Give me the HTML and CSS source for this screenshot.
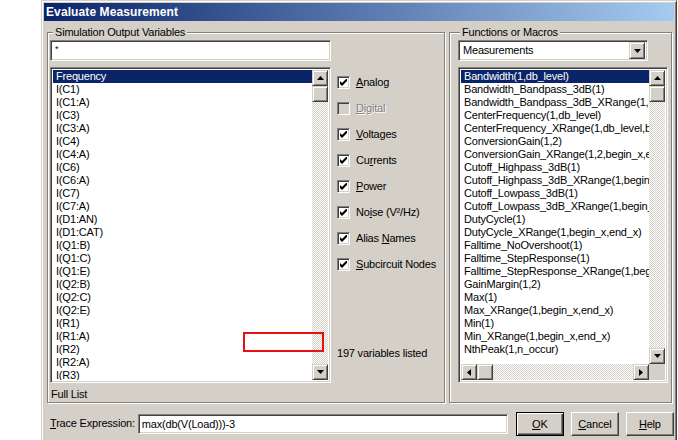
FILE: index.html
```html
<!DOCTYPE html>
<html>
<head>
<meta charset="utf-8">
<title>Evaluate Measurement</title>
<link rel="stylesheet" href="styles.css">
</head>
<body>
<div class="dialog">
  <div class="titlebar">Evaluate Measurement</div>
  <div class="main">
    <div class="group group-left">
      <div class="legend">Simulation Output Variables</div>
      <div class="left-body">
        <div class="left-col">
          <div class="sunken field filter">*</div>
          <div class="sunken listbox var-list">
            <div class="items">
              <div class="item sel">Frequency</div>
              <div class="item">I(C1)</div>
              <div class="item">I(C1:A)</div>
              <div class="item">I(C3)</div>
              <div class="item">I(C3:A)</div>
              <div class="item">I(C4)</div>
              <div class="item">I(C4:A)</div>
              <div class="item">I(C6)</div>
              <div class="item">I(C6:A)</div>
              <div class="item">I(C7)</div>
              <div class="item">I(C7:A)</div>
              <div class="item">I(D1:AN)</div>
              <div class="item">I(D1:CAT)</div>
              <div class="item">I(Q1:B)</div>
              <div class="item">I(Q1:C)</div>
              <div class="item">I(Q1:E)</div>
              <div class="item">I(Q2:B)</div>
              <div class="item">I(Q2:C)</div>
              <div class="item">I(Q2:E)</div>
              <div class="item">I(R1)</div>
              <div class="item">I(R1:A)</div>
              <div class="item">I(R2)</div>
              <div class="item">I(R2:A)</div>
              <div class="item">I(R3)</div>
            </div>
            <div class="vscroll">
              <div class="raised sbtn"><svg width="7" height="4" viewBox="0 0 7 4"><polygon points="3.5,0 7,4 0,4" fill="#000"/></svg></div>
              <div class="raised thumb"></div>
              <div class="track"></div>
              <div class="raised sbtn"><svg width="7" height="4" viewBox="0 0 7 4"><polygon points="0,0 7,0 3.5,4" fill="#000"/></svg></div>
            </div>
            <div class="marker"></div>
          </div>
          <div class="full-list">Full List</div>
        </div>
        <div class="options">
          <div class="opt"><span class="cb"><svg width="7" height="7" viewBox="0 0 7 7"><polygon points="0,2 2,4 7,-1 7,2 2,7 0,5" fill="#000"/></svg></span><span><u>A</u>nalog</span></div>
          <div class="opt disabled"><span class="cb off"></span><span><u>D</u>igital</span></div>
          <div class="opt"><span class="cb"><svg width="7" height="7" viewBox="0 0 7 7"><polygon points="0,2 2,4 7,-1 7,2 2,7 0,5" fill="#000"/></svg></span><span><u>V</u>oltages</span></div>
          <div class="opt"><span class="cb"><svg width="7" height="7" viewBox="0 0 7 7"><polygon points="0,2 2,4 7,-1 7,2 2,7 0,5" fill="#000"/></svg></span><span>Cu<u>r</u>rents</span></div>
          <div class="opt"><span class="cb"><svg width="7" height="7" viewBox="0 0 7 7"><polygon points="0,2 2,4 7,-1 7,2 2,7 0,5" fill="#000"/></svg></span><span><u>P</u>ower</span></div>
          <div class="opt"><span class="cb"><svg width="7" height="7" viewBox="0 0 7 7"><polygon points="0,2 2,4 7,-1 7,2 2,7 0,5" fill="#000"/></svg></span><span>No<u>i</u>se (V²/Hz)</span></div>
          <div class="opt"><span class="cb"><svg width="7" height="7" viewBox="0 0 7 7"><polygon points="0,2 2,4 7,-1 7,2 2,7 0,5" fill="#000"/></svg></span><span>Alias <u>N</u>ames</span></div>
          <div class="opt"><span class="cb"><svg width="7" height="7" viewBox="0 0 7 7"><polygon points="0,2 2,4 7,-1 7,2 2,7 0,5" fill="#000"/></svg></span><span><u>S</u>ubcircuit Nodes</span></div>
          <div class="count">197 variables listed</div>
        </div>
      </div>
    </div>
    <div class="group group-right">
      <div class="legend">Functions or Macros</div>
      <div class="right-body">
        <div class="sunken field combo">
          <span class="combo-text">Measurements</span>
          <span class="raised drop"><svg width="7" height="4" viewBox="0 0 7 4"><polygon points="0,0 7,0 3.5,4" fill="#000"/></svg></span>
        </div>
        <div class="sunken listbox fn-list">
          <div class="fn-main">
            <div class="items">
              <div class="item sel">Bandwidth(1,db_level)</div>
              <div class="item">Bandwidth_Bandpass_3dB(1)</div>
              <div class="item">Bandwidth_Bandpass_3dB_XRange(1,begin_x,end_x)</div>
              <div class="item">CenterFrequency(1,db_level)</div>
              <div class="item">CenterFrequency_XRange(1,db_level,begin_x,end_x)</div>
              <div class="item">ConversionGain(1,2)</div>
              <div class="item">ConversionGain_XRange(1,2,begin_x,end_x)</div>
              <div class="item">Cutoff_Highpass_3dB(1)</div>
              <div class="item">Cutoff_Highpass_3dB_XRange(1,begin_x,end_x)</div>
              <div class="item">Cutoff_Lowpass_3dB(1)</div>
              <div class="item">Cutoff_Lowpass_3dB_XRange(1,begin_x,end_x)</div>
              <div class="item">DutyCycle(1)</div>
              <div class="item">DutyCycle_XRange(1,begin_x,end_x)</div>
              <div class="item">Falltime_NoOvershoot(1)</div>
              <div class="item">Falltime_StepResponse(1)</div>
              <div class="item">Falltime_StepResponse_XRange(1,begin_x,end_x)</div>
              <div class="item">GainMargin(1,2)</div>
              <div class="item">Max(1)</div>
              <div class="item">Max_XRange(1,begin_x,end_x)</div>
              <div class="item">Min(1)</div>
              <div class="item">Min_XRange(1,begin_x,end_x)</div>
              <div class="item">NthPeak(1,n_occur)</div>
            </div>
            <div class="vscroll">
              <div class="raised sbtn"><svg width="7" height="4" viewBox="0 0 7 4"><polygon points="3.5,0 7,4 0,4" fill="#000"/></svg></div>
              <div class="raised thumb"></div>
              <div class="track"></div>
              <div class="raised sbtn"><svg width="7" height="4" viewBox="0 0 7 4"><polygon points="0,0 7,0 3.5,4" fill="#000"/></svg></div>
            </div>
          </div>
          <div class="hrow">
            <div class="hscroll">
              <div class="raised sbtn"><svg width="4" height="7" viewBox="0 0 4 7"><polygon points="4,0 4,7 0,3.5" fill="#000"/></svg></div>
              <div class="raised thumb"></div>
              <div class="track"></div>
              <div class="raised sbtn"><svg width="4" height="7" viewBox="0 0 4 7"><polygon points="0,0 4,3.5 0,7" fill="#000"/></svg></div>
            </div>
            <div class="corner"></div>
          </div>
        </div>
      </div>
    </div>
  </div>
  <div class="bottom">
    <span class="trace-label"><u>T</u>race Expression:</span>
    <div class="sunken field trace">max(db(V(Load)))-3</div>
    <button class="btn default"><u>O</u>K</button>
    <button class="btn"><u>C</u>ancel</button>
    <button class="btn"><u>H</u>elp</button>
  </div>
</div>
</body>
</html>
```

FILE: styles.css
```css
* { box-sizing: border-box; }

html, body {
  margin: 0;
  padding: 0;
  background: #fff;
  overflow: hidden;
}

body {
  font-family: "Liberation Sans", Arial, sans-serif;
  font-size: 11px;
  line-height: 13px;
  letter-spacing: -0.2px;
  color: #000;
}

.dialog {
  margin-left: 41px;
  width: 636px;
  height: 442px;
  background: #d4d0c8;
  border: 1px solid;
  border-color: #d4d0c8 #404040 #404040 #d4d0c8;
  box-shadow: inset 1px 1px 0 #fff, inset -1px -1px 0 #808080;
  padding: 2px;
}

.titlebar {
  height: 18px;
  line-height: 19px;
  padding-left: 2px;
  color: #fff;
  font-weight: bold;
  font-size: 12px;
  letter-spacing: 0.1px;
  background: linear-gradient(to right, #0a246a, #a6caf0);
}

.main {
  display: flex;
  gap: 4px;
  padding: 11px 0 0 3px;
}

.group {
  height: 371px;
  border: 1px solid #808080;
  box-shadow: inset 1px 1px 0 #fff, 1px 1px 0 #fff;
}

.group-left { width: 398px; }
.group-right { width: 223px; }

.legend {
  width: fit-content;
  margin: -7px 0 0 5px;
  padding: 0 2px;
  height: 13px;
  background: #d4d0c8;
}

.group-right .legend { margin-left: 10px; }

.sunken {
  border: 1px solid;
  border-color: #808080 #fff #fff #808080;
  box-shadow: inset 1px 1px 0 #404040, inset -1px -1px 0 #d4d0c8;
  background: #fff;
}

.raised {
  background: #d4d0c8;
  border: 1px solid;
  border-color: #d4d0c8 #404040 #404040 #d4d0c8;
  box-shadow: inset 1px 1px 0 #fff, inset -1px -1px 0 #808080;
}

.left-body {
  display: flex;
  padding: 1px 0 0 2px;
}

.left-col { width: 281px; }

.field {
  height: 21px;
  padding: 2px 4px;
  line-height: 15px;
}

.filter { font-size: 9px; line-height: 12px; }

.listbox {
  margin-top: 6px;
  height: 316px;
  padding: 2px;
  display: flex;
  position: relative;
}

.items {
  flex: 1;
  overflow: hidden;
  min-width: 0;
}

.item {
  height: 13px;
  line-height: 13px;
  padding-left: 3px;
  white-space: nowrap;
}

.item.sel {
  background: #0a246a;
  color: #fff;
}

.vscroll {
  width: 16px;
  display: flex;
  flex-direction: column;
}

.sbtn {
  width: 16px;
  height: 16px;
  flex: none;
  display: flex;
  align-items: center;
  justify-content: center;
}

.thumb {
  width: 16px;
  height: 16px;
  flex: none;
}

.track {
  flex: 1;
  background-color: #fff;
  background-image: repeating-conic-gradient(#d4d0c8 0 25%, #fff 0 50%);
  background-size: 2px 2px;
}

.marker {
  position: absolute;
  left: 192px;
  top: 264px;
  width: 81px;
  height: 20px;
  border: 2px solid #e81010;
}

.full-list {
  margin-top: 5px;
  padding-left: 1px;
}

.options {
  margin-left: 6px;
  padding-top: 29px;
}

.opt {
  height: 26px;
  display: flex;
  align-items: center;
  gap: 6px;
  white-space: nowrap;
}

.cb {
  width: 13px;
  height: 13px;
  border: 1px solid;
  border-color: #808080 #fff #fff #808080;
  box-shadow: inset 1px 1px 0 #404040, inset -1px -1px 0 #d4d0c8;
  background: #fff;
  display: flex;
  align-items: center;
  justify-content: center;
}

.cb.off { background: #d4d0c8; }

.opt.disabled {
  color: #808080;
  text-shadow: 1px 1px 0 #fff;
}

.count {
  margin-top: 70px;
  white-space: nowrap;
}

.right-body { padding: 1px 0 0 8px; }

.combo {
  width: 190px;
  display: flex;
  align-items: center;
  padding: 2px;
}

.combo-text {
  flex: 1;
  padding-left: 2px;
}

.drop {
  width: 16px;
  height: 17px;
  display: flex;
  align-items: center;
  justify-content: center;
}

.fn-list {
  width: 210px;
  flex-direction: column;
}

.fn-main {
  display: flex;
  height: 296px;
}

.hrow {
  display: flex;
  height: 16px;
}

.hscroll {
  flex: 1;
  display: flex;
}

.hscroll .track { flex: 1; }

.corner {
  width: 16px;
  background: #d4d0c8;
}

.bottom {
  display: flex;
  align-items: center;
  height: 25px;
  margin-top: 8px;
  padding-left: 6px;
}

.trace-label {
  flex: none;
  white-space: nowrap;
}

.trace {
  width: 370px;
  height: 20px;
  margin-left: 3px;
  padding: 2px 3px;
  line-height: 14px;
}

.btn {
  font-family: "Liberation Sans", Arial, sans-serif;
  font-size: 11px;
  letter-spacing: -0.2px;
  color: #000;
  width: 48px;
  height: 24px;
  margin-left: 7px;
  padding: 0;
  background: #d4d0c8;
  border: 1px solid;
  border-color: #fff #404040 #404040 #fff;
  box-shadow: inset -1px -1px 0 #808080;
}

.btn.default {
  margin-left: 8px;
  border-color: #000;
  box-shadow: inset 1px 1px 0 #fff, inset -1px -1px 0 #404040, inset -2px -2px 0 #808080;
}
```
